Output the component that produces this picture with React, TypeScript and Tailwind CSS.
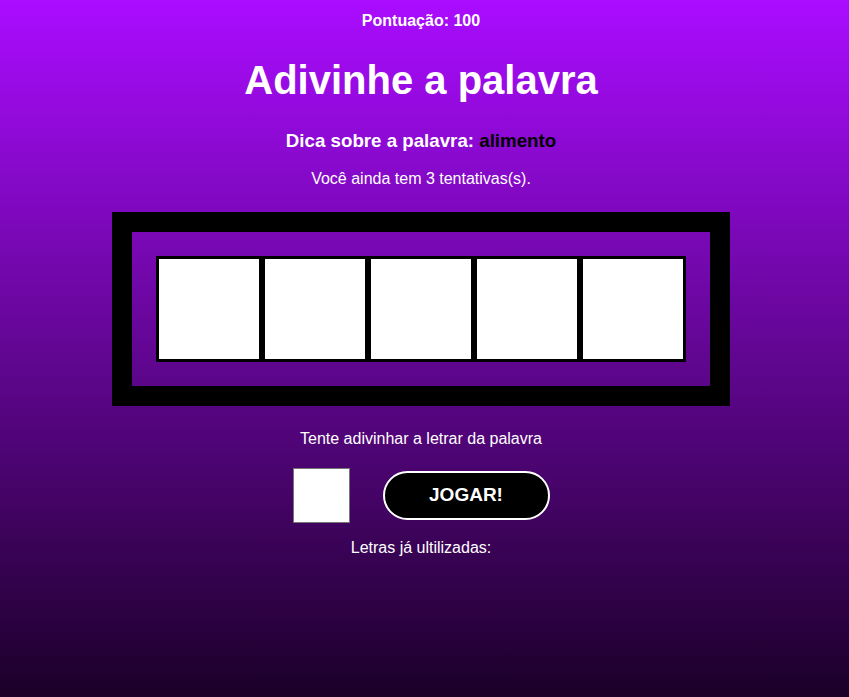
import React from "react";

export default function App() {
  const cells = [0, 1, 2, 3, 4];
  return (
    <div className="min-h-screen w-full bg-[linear-gradient(to_bottom,#aa0cff,#1b0028)] font-['Liberation_Sans',Arial,sans-serif] text-white">
      <div className="w-[842px] flex flex-col items-center">
        <p className="mt-[12px] text-[16px] leading-[18px] font-bold">Pontuação: 100</p>
        <h1 className="mt-[27px] text-[40px] leading-[46px] font-bold">Adivinhe a palavra</h1>
        <h3 className="mt-[27px] text-[18.72px] leading-[22px] font-bold">
          Dica sobre a palavra: <span className="text-black">alimento</span>
        </h3>
        <p className="mt-[18px] text-[16px] leading-[18px]">Você ainda tem 3 tentativas(s).</p>
        <div className="mt-[24px] border-[20px] border-black p-[24px]">
          <div className="flex">
            {cells.map((c) => (
              <div key={c} className="w-[106px] h-[106px] border-[3px] border-black bg-white" />
            ))}
          </div>
        </div>
        <p className="mt-[24px] text-[16px] leading-[18px]">Tente adivinhar a letrar da palavra</p>
        <div className="mt-[20px] flex items-center gap-[33px]">
          <input
            type="text"
            maxLength={1}
            className="w-[57px] h-[55px] border border-[#767676] bg-white text-black outline-none"
          />
          <button className="w-[167px] h-[49px] rounded-full border-2 border-white bg-black text-white text-[19px] font-bold">
            JOGAR!
          </button>
        </div>
        <p className="mt-[16px] text-[16px] leading-[18px]">Letras já ultilizadas:</p>
      </div>
    </div>
  );
}
